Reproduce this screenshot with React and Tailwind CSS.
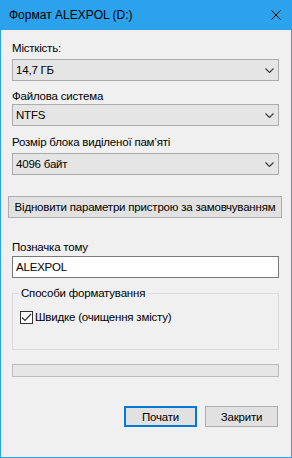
const FONT = { fontFamily: '"Liberation Sans", Arial, sans-serif' };
const TXT = 'text-[11.5px] leading-[16px] tracking-[-0.2px] text-black';

function Combo({ value }) {
  return (
    <div className="flex h-[22px] w-[267px] items-center justify-between border border-[#acacac] bg-[#e5e5e5] pl-[3px] pr-[4px]">
      <span className={TXT}>{value}</span>
      <svg width="9" height="5" viewBox="0 0 9 5">
        <path d="M0.5 0.5 L4.5 4.5 L8.5 0.5" fill="none" stroke="#404040" strokeWidth="1.2" />
      </svg>
    </div>
  );
}

function Label({ children, className = '' }) {
  return <div className={`whitespace-nowrap ${TXT} ${className}`}>{children}</div>;
}

export default function App() {
  return (
    <div style={FONT} className="flex h-[458px] w-[292px] flex-col border border-t-0 border-[#2ca1ec] bg-[#f0f0f0]">
      {/* Title bar */}
      <div className="-mx-px flex h-[30px] shrink-0 items-center justify-between bg-[#2ca1ec] pl-[9px] pr-[11px]">
        <span className="text-[12px] leading-[16px] text-black">Формат ALEXPOL (D:)</span>
        <svg width="10" height="10" viewBox="0 0 10 10">
          <path d="M0.5 0.5 L9.5 9.5 M9.5 0.5 L0.5 9.5" stroke="#000" strokeWidth="1" />
        </svg>
      </div>

      <div className="flex flex-col pl-[11px]">
        <Label className="mt-[10px]">Місткість:</Label>
        <div className="mt-[3px]"><Combo value="14,7 ГБ" /></div>

        <Label className="mt-[7px]">Файлова система</Label>
        <div><Combo value="NTFS" /></div>

        <Label className="mt-[8px]">Розмір блока виділеної пам’яті</Label>
        <div className="mt-[3px]"><Combo value="4096 байт" /></div>

        <button className={`-ml-[4px] mt-[21px] h-[22px] w-[274px] whitespace-nowrap border border-[#adadad] bg-[#e1e1e1] ${TXT}`}>
          Відновити параметри пристрою за замовчуванням
        </button>

        <Label className="mt-[21px]">Позначка тому</Label>
        <div className={`mt-[1px] flex h-[22px] w-[267px] items-center border border-[#7a7a7a] bg-white pl-[3px] ${TXT}`}>
          ALEXPOL
        </div>

        {/* Group box */}
        <div className="relative mt-[15px] h-[57px] w-[267px] border border-[#dcdcdc]">
          <span className={`absolute -top-[9px] left-[6px] whitespace-nowrap bg-[#f0f0f0] px-[2px] ${TXT}`}>
            Способи форматування
          </span>
          <div className="ml-[7px] mt-[15px] flex items-center gap-[2px]">
            <div className="flex h-[13px] w-[13px] items-center justify-center border border-[#333333] bg-white">
              <svg width="11" height="9" viewBox="0 0 11 9">
                <path d="M1 4.5 L4 7.5 L10 1" fill="none" stroke="#333" strokeWidth="1.2" />
              </svg>
            </div>
            <span className={`whitespace-nowrap ${TXT}`}>Швидке (очищення змісту)</span>
          </div>
        </div>

        {/* Progress bar */}
        <div className="mt-[14px] h-[13px] w-[267px] border border-[#bcbcbc] bg-[#e6e6e6]" />

        <div className="mt-[29px] flex w-[266px] justify-end gap-[8px]">
          <button className={`h-[21px] w-[73px] border-2 border-[#0078d7] bg-[#e1e1e1] ${TXT}`}>
            Почати
          </button>
          <button className={`h-[21px] w-[73px] border border-[#adadad] bg-[#e1e1e1] ${TXT}`}>
            Закрити
          </button>
        </div>
      </div>
    </div>
  );
}
